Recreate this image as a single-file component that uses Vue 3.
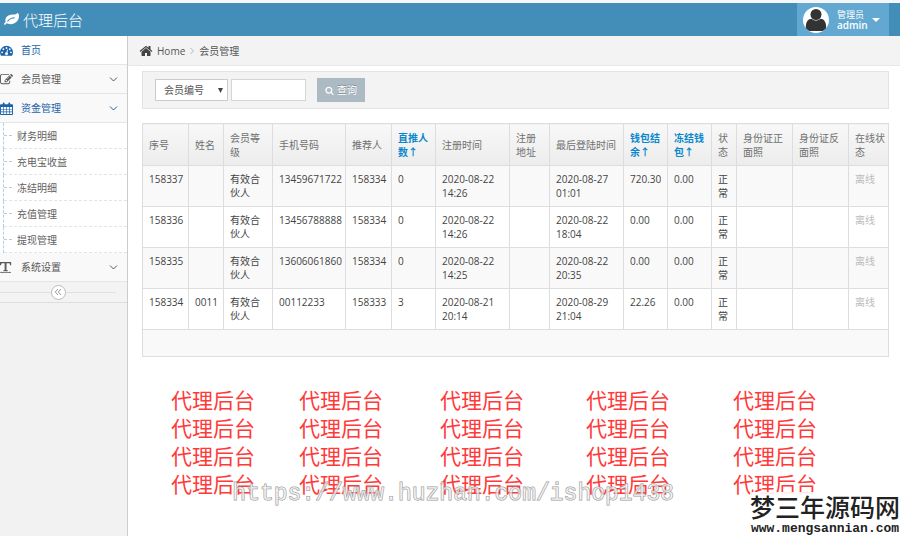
<script setup>
import { ref } from 'vue'

const field = ref('会员编号')
const keyword = ref('')

const columns = [
  { title: '序号', width: 46 },
  { title: '姓名', width: 35 },
  { title: '会员等\n级', width: 49 },
  { title: '手机号码', width: 73 },
  { title: '推荐人', width: 46 },
  { title: '直推人\n数↑', width: 44, sort: true },
  { title: '注册时间', width: 74 },
  { title: '注册\n地址', width: 40 },
  { title: '最后登陆时间', width: 74 },
  { title: '钱包结\n余↑', width: 44, sort: true },
  { title: '冻结钱\n包↑', width: 44, sort: true },
  { title: '状\n态', width: 25 },
  { title: '身份证正\n面照', width: 56 },
  { title: '身份证反\n面照', width: 56 },
  { title: '在线状\n态', width: 40 }
]

const level = '有效合\n伙人'
const rows = [
  ['158337', '', level, '13459671722', '158334', '0', '2020-08-22\n14:26', '', '2020-08-27\n01:01', '720.30', '0.00', '正\n常', '', '', '离线'],
  ['158336', '', level, '13456788888', '158334', '0', '2020-08-22\n14:26', '', '2020-08-22\n18:04', '0.00', '0.00', '正\n常', '', '', '离线'],
  ['158335', '', level, '13606061860', '158334', '0', '2020-08-22\n14:25', '', '2020-08-22\n20:35', '0.00', '0.00', '正\n常', '', '', '离线'],
  ['158334', '0011', level, '00112233', '158333', '3', '2020-08-21\n20:14', '', '2020-08-29\n21:04', '22.26', '0.00', '正\n常', '', '', '离线']
]

const funds = ['财务明细', '充电宝收益', '冻结明细', '充值管理', '提现管理']
</script>

<template>
  <div class="page">
    <header class="navbar">
      <a class="brand" href="#">
        <svg class="leaf" viewBox="0 0 1792 1792"><path d="M1280 704q0-26-19-45t-45-19q-172 0-318 49.500t-259.500 134-235.500 219.500q-19 21-19 45 0 26 19 45t45 19q24 0 45-19 27-24 74-71t67-66q137-124 268.500-176t313.500-52q26 0 45-19t19-45zm512-198q0 95-20 193-46 224-184.500 383t-357.500 268q-214 108-438 108-148 0-286-47-15-5-88-42t-96-37q-16 0-39.500 32t-45 70-52.500 70-60 32q-43 0-63.500-17.500t-45.500-59.500q-2-4-6-11t-5.500-10-3-9.500-1.500-13.500q0-35 31-73.500t68-65.500 68-56 31-48q0-4-14-38t-16-44q-9-51-9-104 0-115 43.500-220t119-184.500 170.500-139 204-95.500q55-18 145-25.500t179.500-9 178.500-6 163.500-24 113.500-56.500l29.500-29.500 29.500-28 27-20 36.500-16 43.500-4.500q39 0 70.500 46t47.500 112 24 124 8 96z" /></svg>
        <span>代理后台</span>
      </a>
      <button class="user" type="button">
        <svg class="avatar" viewBox="0 0 26 26">
          <circle cx="13" cy="13" r="13" fill="#fff" />
          <path d="M2.800 20.500c0-5 1.700-8.300 5.700-8.700 2.500 2.400 6.500 2.400 9 0 4 .4 5.700 3.700 5.700 8.700 0 1.200-1.600 2.200-3.400 3.500H6.200c-1.800-1.300-3.400-2.300-3.400-3.500z" fill="#333" />
          <circle cx="13" cy="7.500" r="5.500" fill="#333" />
        </svg>
        <span class="who"><span>管理员</span><span class="login">admin</span></span>
        <svg class="caret" viewBox="0 0 8 4"><path d="M0 0h8L4 4z" /></svg>
      </button>
    </header>

    <div class="body">
      <aside class="sidebar">
        <nav>
          <a class="item active" href="#">
            <svg viewBox="0 0 14 14">
              <path d="M7 2a7 7 0 0 0-7 7c0 1.400.4 2.600 1 3.700h12c.6-1.100 1-2.300 1-3.700a7 7 0 0 0-7-7z" />
              <g fill="#fff"><circle cx="2.300" cy="9" r="1" /><circle cx="3.700" cy="5.700" r="1" /><circle cx="7" cy="4.300" r="1" /><circle cx="10.500" cy="5.700" r="1" /><circle cx="11.800" cy="9" r="1" /><path d="M7.700 5.900l.9.200-.6 3a1.600 1.600 0 1 1-1.100-.3z" /></g>
            </svg>
            <span>首页</span>
          </a>
          <a class="item" href="#">
            <svg viewBox="0 0 1792 1792"><path d="M888 1184l116-116-152-152-116 116v56h96v96h56zm440-720q-16-16-33 1l-350 350q-17 17-1 33t33-1l350-350q17-17 1-33zm80 594v190q0 119-84.500 203.500t-203.500 84.500h-832q-119 0-203.500-84.500t-84.500-203.500v-832q0-119 84.500-203.500t203.500-84.500h832q63 0 117 25 15 7 18 23 3 17-9 29l-49 49q-14 14-32 8-23-6-45-6h-832q-66 0-113 47t-47 113v832q0 66 47 113t113 47h832q66 0 113-47t47-113v-126q0-13 9-22l64-64q15-15 35-7t20 29zm-96-738l288 288-672 672h-288v-288zm444 132l-92 92-288-288 92-92q28-28 68-28t68 28l152 152q28 28 28 68t-28 68z" /></svg>
            <span>会员管理</span>
            <svg class="chevron" viewBox="0 0 9 9"><path d="M1 2.500l3.500 3.500L8 2.500" /></svg>
          </a>
          <a class="item open" href="#">
            <svg viewBox="0 0 14 14">
              <path fill-rule="evenodd" d="M1 2.300h2V1.500a1 1 0 0 1 2 0v.8h4v-.8a1 1 0 0 1 2 0v.8h2a1 1 0 0 1 1 1V13a1 1 0 0 1-1 1H1a1 1 0 0 1-1-1V3.300a1 1 0 0 1 1-1zM1 5.500v2h2.300v-2zm3 0v2h2.700v-2zm3.400 0v2H10v-2zm3.300 0v2H13v-2zM1 8.200v2h2.300v-2zm3 0v2h2.700v-2zm3.400 0v2H10v-2zm3.300 0v2H13v-2zM1 11v2h2.300v-2zm3 0v2h2.700v-2zm3.400 0v2H10v-2zm3.300 0v2H13v-2z" />
            </svg>
            <span>资金管理</span>
            <svg class="chevron" viewBox="0 0 9 9"><path d="M1 2.500l3.500 3.500L8 2.500" /></svg>
          </a>
          <ul class="submenu">
            <li v-for="name in funds" :key="name"><a href="#">{{ name }}</a></li>
          </ul>
          <a class="item" href="#">
            <svg viewBox="0 0 14 14"><path d="M0 1h12v3.500h-1L10.300 2.300H7v7.500l1.500.4v.8h-5v-.8L5 9.800V2.300H1.700L1 4.500H0zM0 12.300l1.500-1v.6h9v-.6l1.500 1-1.500 1v-.6h-9v.6z" /></svg>
            <span>系统设置</span>
            <svg class="chevron" viewBox="0 0 9 9"><path d="M1 2.500l3.500 3.500L8 2.500" /></svg>
          </a>
        </nav>
        <div class="collapse">
          <button type="button" aria-label="收起菜单">
            <svg viewBox="0 0 8 8"><path d="M4 1L1.300 4 4 7M7 1L4.300 4 7 7" /></svg>
          </button>
        </div>
      </aside>

      <main class="main">
        <div class="crumbs">
          <svg class="home" viewBox="0 0 1792 1792"><path d="M1472 992v480q0 26-19 45t-45 19h-384v-384h-256v384h-384q-26 0-45-19t-19-45v-480q0-1 .5-3t.5-3l575-474 575 474q1 2 1 6zm223-69l-62 74q-8 9-21 11h-3q-13 0-21-7l-692-577-692 577q-12 8-24 7-13-2-21-11l-62-74q-8-10-7-23.500t11-21.500l719-599q32-26 76-26t76 26l244 204v-195q0-14 9-23t23-9h192q14 0 23 9t9 23v408l219 182q10 8 11 21.500t-7 23.500z" /></svg>
          <a href="#">Home</a>
          <svg class="sep" viewBox="0 0 4 8"><path d="M.5 1L3.500 4 .5 7" /></svg>
          <span>会员管理</span>
        </div>

        <div class="content">
          <form class="search" @submit.prevent>
            <div class="picker">
              <select v-model="field" aria-label="查询字段">
                <option>会员编号</option>
              </select>
              <svg viewBox="0 0 5 5"><path d="M0 0h5L2.500 5z" /></svg>
            </div>
            <input v-model="keyword" type="text" aria-label="关键字" />
            <button type="submit">
              <svg viewBox="0 0 1792 1792"><path d="M1216 832q0-185-131.500-316.500t-316.500-131.500-316.500 131.500-131.500 316.500 131.500 316.500 316.500 131.500 316.500-131.500 131.500-316.500zm512 832q0 52-38 90t-90 38q-54 0-90-38l-343-342q-179 124-399 124-143 0-273.500-55.500t-225-150-150-225-55.500-273.500 55.500-273.500 150-225 225-150 273.500-55.500 273.500 55.500 225 150 150 225 55.500 273.500q0 220-124 399l343 343q37 37 37 90z" /></svg>
              <span>查询</span>
            </button>
          </form>

          <table>
            <colgroup>
              <col v-for="c in columns" :key="c.title" :style="{ width: c.width + 'px' }" />
            </colgroup>
            <thead>
              <tr>
                <th v-for="c in columns" :key="c.title" scope="col">
                  <a v-if="c.sort" href="#">{{ c.title }}</a>
                  <template v-else>{{ c.title }}</template>
                </th>
              </tr>
            </thead>
            <tbody>
              <tr v-for="row in rows" :key="row[0]">
                <td v-for="(cell, i) in row" :key="i">{{ cell }}</td>
              </tr>
            </tbody>
            <tfoot>
              <tr><td :colspan="columns.length"></td></tr>
            </tfoot>
          </table>

          <div class="stamps">
            <template v-for="line in 4" :key="line">
              <span v-for="n in 5" :key="n">代理后台</span>
            </template>
          </div>
        </div>
      </main>
    </div>

    <div class="url">https://www.huzhan.com/ishop1438</div>
    <div class="source">
      <strong>梦三年源码网</strong>
      <span>www.mengsannian.com</span>
    </div>
  </div>
</template>

<style>
body {
  margin: 0;
  background: #fff;
}
</style>

<style scoped>
.page {
  position: relative;
  display: flex;
  flex-direction: column;
  min-height: 100vh;
  box-sizing: border-box;
  overflow: hidden;
  border-top: 3px solid #f6f6f6;
  font: 10px/14px "Open Sans", "Noto Sans CJK SC", sans-serif;
  color: #444;
}
a {
  color: inherit;
  text-decoration: none;
}
button,
input,
select {
  font: inherit;
  box-sizing: border-box;
  margin: 0;
  border-radius: 0;
}
svg {
  display: block;
  flex: none;
  fill: currentColor;
}

.navbar {
  display: flex;
  justify-content: space-between;
  height: 33px;
  padding-right: 11px;
  background: #438eb9;
  color: #fff;
}
.brand {
  display: flex;
  align-items: center;
  gap: 4px;
  padding-left: 4px;
  font-size: 15px;
  font-weight: 300;
}
.leaf {
  width: 15px;
  height: 15px;
}
.user {
  display: flex;
  align-items: center;
  width: 92px;
  padding: 0 9px 0 6px;
  border: 0;
  background: #62a8d1;
  color: #fff;
  text-align: left;
}
.avatar {
  width: 26px;
  height: 26px;
}
.who {
  display: flex;
  flex: 1;
  flex-direction: column;
  padding-left: 8px;
  font-size: 9px;
  line-height: 11px;
}
.login {
  font-size: 10px;
  font-weight: 600;
}
.caret {
  width: 8px;
  height: 4px;
}

.body {
  display: flex;
  flex: 1;
}
.sidebar {
  flex: none;
  width: 127px;
  border-right: 1px solid #ccc;
  background: #f2f2f2;
}
.item {
  display: flex;
  align-items: center;
  gap: 8px;
  height: 28px;
  padding-right: 9px;
  border-bottom: 1px solid #e5e5e5;
  background: #f9f9f9;
  color: #585858;
}
.item > svg {
  width: 13px;
  height: 13px;
}
.item > .chevron,
.sep,
.collapse svg {
  fill: none;
  stroke: currentColor;
}
.item > .chevron {
  width: 9px;
  height: 9px;
  margin-left: auto;
}
.active {
  background: #fff;
}
.active,
.open {
  color: #1963aa;
}
.submenu {
  margin: 0;
  padding: 0 0 0 3px;
  list-style: none;
  background: #fff;
}
.submenu li {
  border-left: 1px dashed #b5cde0;
}
.submenu a {
  display: flex;
  align-items: center;
  gap: 5px;
  height: 25px;
  border-bottom: 1px dashed #e4e4e4;
  color: #616161;
}
.submenu a::before {
  content: "";
  width: 8px;
  border-top: 1px dashed #b5cde0;
}
.collapse {
  display: flex;
  align-items: center;
  height: 20px;
  padding-right: 11px;
  border-bottom: 1px solid #ddd;
  background: #f3f3f3;
}
.collapse::before,
.collapse::after {
  content: "";
  flex: 1;
  border-top: 1px solid #e0e0e0;
}
.collapse button {
  display: grid;
  place-items: center;
  width: 15px;
  height: 15px;
  padding: 0;
  border: 1px solid #bbb;
  border-radius: 50%;
  background: #fff;
  color: #999;
}
.collapse svg {
  width: 8px;
  height: 8px;
}

.main {
  flex: 1;
  min-width: 0;
  background: #fff;
}
.crumbs {
  display: flex;
  align-items: center;
  gap: 4px;
  height: 29px;
  padding-left: 11px;
  border-bottom: 1px solid #e8e8e8;
  background: #f3f3f3;
  color: #555;
}
.home {
  width: 14px;
  height: 14px;
  color: #444;
}
.sep {
  width: 4px;
  height: 8px;
  margin: 0 1px;
  color: #b2b6bf;
}
.content {
  padding: 5px 11px 0 14px;
}
.search {
  display: flex;
  align-items: center;
  height: 36px;
  padding-left: 12px;
  border: 1px solid #e3e3e3;
  background: #f3f3f3;
}
.picker {
  display: grid;
  align-items: center;
  width: 73px;
  margin-right: 3px;
}
.picker select,
.picker svg {
  grid-area: 1 / 1;
}
.picker select {
  height: 22px;
  padding: 0 8px;
  border: 1px solid #ccc;
  appearance: none;
  background: #fff;
  color: #555;
}
.picker svg {
  justify-self: end;
  width: 5px;
  height: 5px;
  margin-right: 5px;
  pointer-events: none;
}
.search input {
  width: 75px;
  height: 22px;
  padding: 0 4px;
  border: 1px solid #d5d5d5;
  background: #fff;
}
.search button {
  display: flex;
  align-items: center;
  gap: 3px;
  height: 24px;
  margin-left: 11px;
  padding: 0 8px;
  border: 0;
  background: #abbac3;
  color: #fff;
  text-shadow: 0 -1px 0 rgba(0, 0, 0, 0.25);
}
.search button svg {
  width: 9px;
  height: 9px;
}

table {
  width: 100%;
  margin-top: 14px;
  border-collapse: collapse;
  table-layout: fixed;
}
th,
td {
  padding: 6px 0 6px 6px;
  border: 1px solid #ddd;
  text-align: left;
  vertical-align: top;
  white-space: pre;
}
th {
  padding-top: 7px;
  background: linear-gradient(#f8f8f8, #ececec);
  color: #707070;
  font-weight: 400;
  vertical-align: middle;
}
th a {
  color: #0b88cc;
  font-weight: 700;
}
tbody tr:nth-child(odd) {
  background: #f9f9f9;
}
tbody td:last-child {
  color: #bbb;
}
tfoot td {
  height: 14px;
  background: #f9f9f9;
}

.stamps {
  display: grid;
  grid-template-columns: 128fr 141fr 146fr 147fr 156fr;
  margin-top: 29px;
  padding-left: 29px;
  color: #ff3a3a;
  font-size: 21px;
  line-height: 28px;
}
.url {
  position: absolute;
  right: 226px;
  bottom: 28px;
  color: rgba(255, 255, 255, 0.6);
  font: 23px/28px "Liberation Mono", monospace;
  paint-order: stroke fill;
  -webkit-text-stroke: 1px #999;
}
.source {
  position: absolute;
  right: 0;
  bottom: 0;
  display: flex;
  flex-direction: column;
  align-items: center;
  background: rgba(255, 255, 255, 0.9);
  color: #222;
}
.source strong {
  font-size: 25px;
  font-weight: 500;
  line-height: 30px;
}
.source span {
  font: bold 13px/14px "Liberation Mono", monospace;
}
</style>
